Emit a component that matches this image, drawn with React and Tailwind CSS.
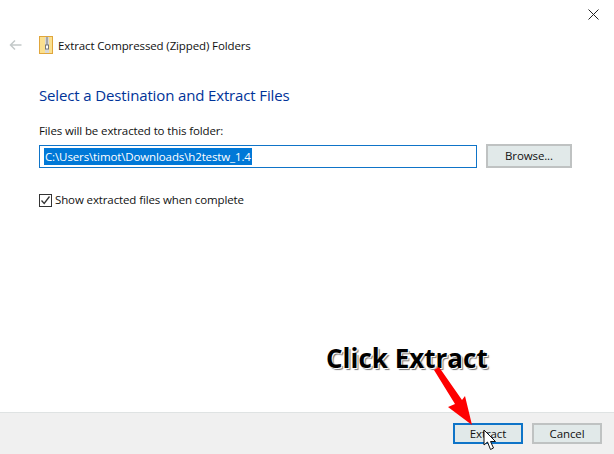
import React from "react";

const font = "font-['Open_Sans','Noto_Sans',sans-serif]";

const ZipIcon = () => (
    <svg width="14" height="18" viewBox="0 0 14 18" className="shrink-0">
        <rect x="0.5" y="0.5" width="13" height="17" fill="#fbe08f" stroke="#e0a63c" />
        <rect x="6" y="1" width="4" height="16" fill="#d8d8d8" />
        <path d="M7 2h2M7 4h2M7 6h2M7 8h2" stroke="#777" strokeWidth="1" />
        <rect x="6.5" y="9" width="3" height="4" fill="#fff" stroke="#777" />
    </svg>
);

const Button = ({ label, active, className = "" }) => (
    <button
        className={`h-[21px] w-[70px] text-[11.5px] tracking-[-0.12px] text-[#111] bg-[#e1e9e9] border-2 ${
            active ? "border-[#0f74c8]" : "border-[#bfc2c2]"
        } ${className}`}
    >
        {label}
    </button>
);

export default function App() {
    return (
        <div className={`relative flex flex-col w-[614px] h-[454px] bg-white overflow-hidden ${font}`}>
            <div className="flex justify-end pt-[9px] pr-[15px] h-[36px]">
                <svg width="11" height="11" viewBox="0 0 11 11">
                    <path d="M0.5 0.5L10.5 10.5M10.5 0.5L0.5 10.5" stroke="#222" strokeWidth="1" />
                </svg>
            </div>

            <div className="flex items-center h-[18px] pl-[9px]">
                <svg width="13" height="12" viewBox="0 0 13 12" className="mr-[17px]">
                    <path d="M12.5 6H1.5M6 1.5L1.5 6L6 10.5" fill="none" stroke="#c3c9c9" strokeWidth="1.5" />
                </svg>
                <ZipIcon />
                <span className="ml-[5px] mt-[2px] text-[11.5px] tracking-[-0.12px] leading-[18px] text-[#111]">
                    Extract Compressed (Zipped) Folders
                </span>
            </div>

            <div className="flex-1 flex flex-col pl-[39px]">
                <h1 className="mt-[30px] text-[15px] tracking-[-0.14px] leading-[22px] text-[#003399]">
                    Select a Destination and Extract Files
                </h1>

                <label className="mt-[17px] text-[11.5px] tracking-[-0.12px] leading-[16px] text-[#111]">
                    Files will be extracted to this folder:
                </label>

                <div className="mt-[5px] flex items-center">
                    <div className="flex items-center w-[438px] h-[23px] border-[1.5px] border-[#0f74c8] pl-[4px]">
                        <span className="bg-[#0078d7] text-white text-[11.5px] tracking-[-0.12px] leading-[17px] px-[1px]">
                            C:\Users\timot\Downloads\h2testw_1.4
                        </span>
                    </div>
                    <Button label="Browse..." className="ml-[9px] !w-[86px] !h-[24px]" />
                </div>

                <div className="mt-[24px] flex items-center">
                    <span className="flex items-center justify-center w-[13px] h-[13px] border border-[#333] bg-white">
                        <svg width="11" height="11" viewBox="0 0 11 11">
                            <path d="M1.5 5.5L4.2 8.5L9.5 1.5" fill="none" stroke="#333" strokeWidth="1.3" />
                        </svg>
                    </span>
                    <span className="ml-[3px] text-[11.5px] tracking-[-0.12px] leading-[16px] text-[#111]">
                        Show extracted files when complete
                    </span>
                </div>
            </div>

            <div className="flex justify-end gap-[9px] h-[42px] pt-[10px] pr-[12px] bg-[#f0f0f0] border-t border-[#dfe3e3]">
                <Button label="Extract" active />
                <Button label="Cancel" />
            </div>

            <div className="absolute left-[326px] top-[341px] text-[26px] leading-[34px] font-bold text-black font-['Open_Sans',sans-serif] [text-shadow:1px_1px_0_#fff,2px_2px_1px_#777]">
                Click Extract
            </div>

            <svg className="absolute left-[425px] top-[360px]" width="60" height="70" viewBox="0 0 60 70">
                <path d="M9 10L14 7L37 40L40 36L47 65L23 47L30 44Z" fill="#fe0000" />
            </svg>

            <svg className="absolute left-[483px] top-[429px]" width="16" height="23" viewBox="0 0 16 23">
                <path d="M1 1L1 16L4.5 13L7.5 20.5L10.5 19L7.5 12.5L12.5 12.5Z" fill="#fff" stroke="#111" strokeWidth="1" />
            </svg>
        </div>
    );
}
